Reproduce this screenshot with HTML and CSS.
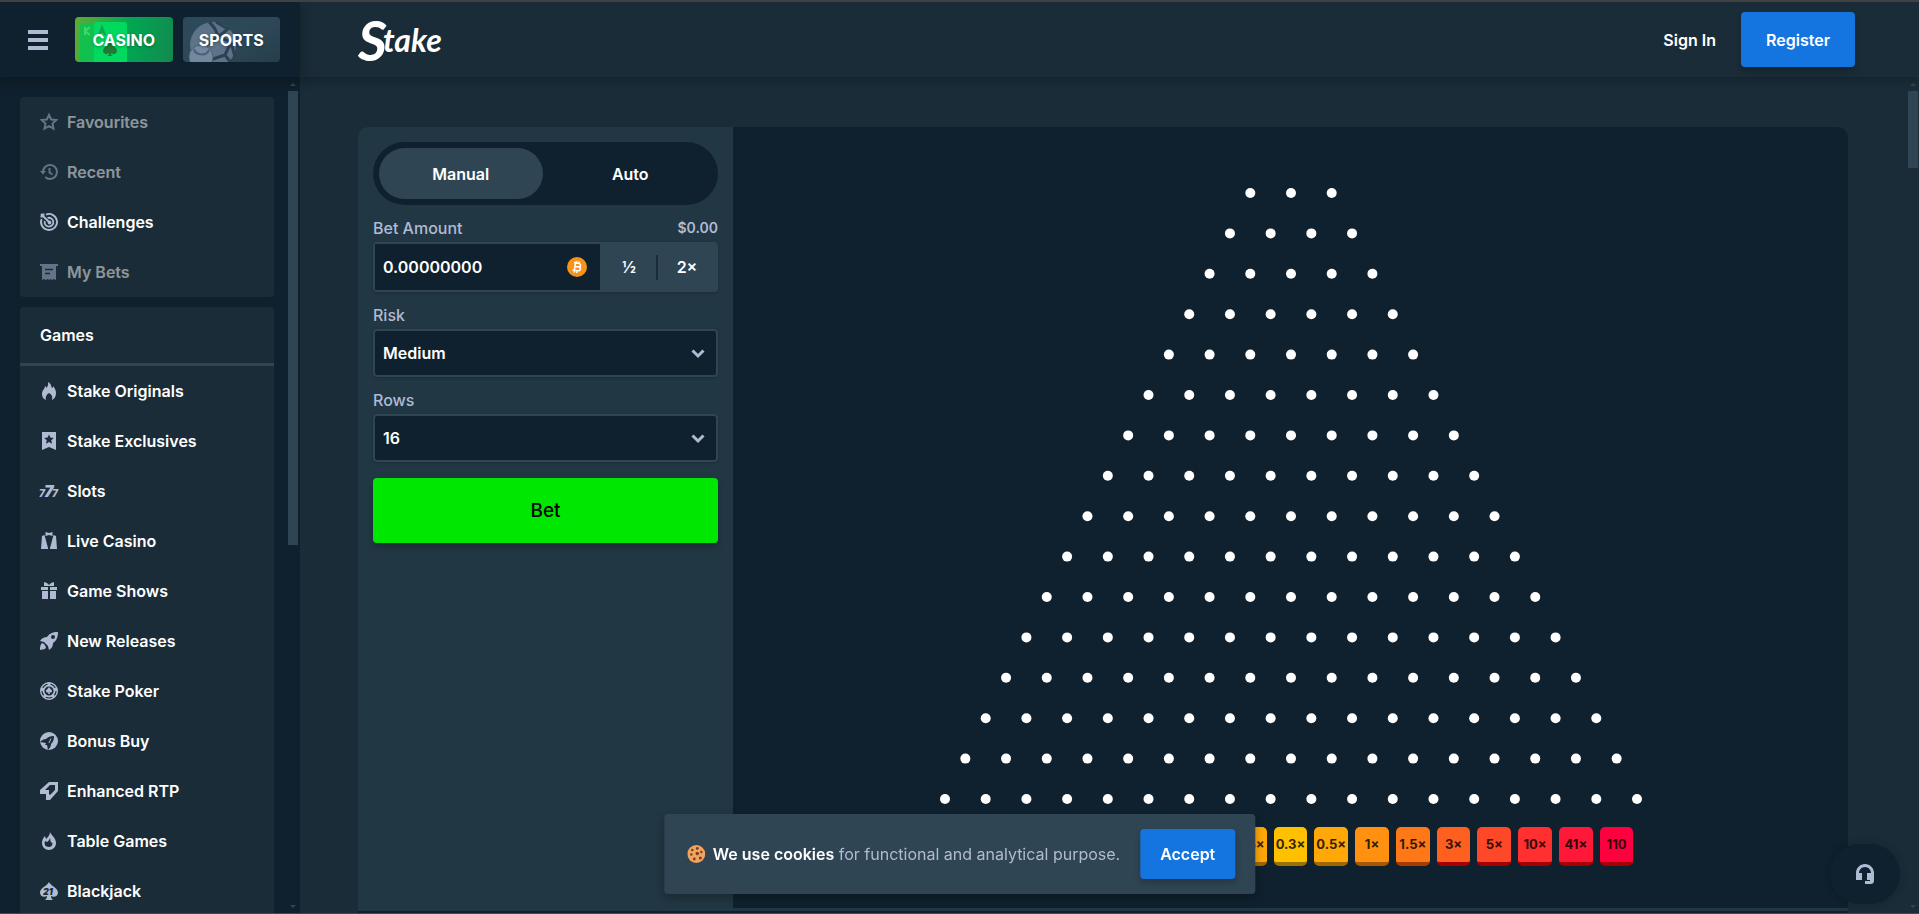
FILE: index.html
```html
<!DOCTYPE html>
<html lang="en">
<head>
  <meta charset="UTF-8" />
  <meta name="viewport" content="width=device-width, initial-scale=1.0" />
  <title>Plinko - Stake</title>
  <link rel="stylesheet" href="styles.css">
</head>
<body>
  <div class="app">
    <div class="side-header">
      <button class="menu-btn" type="button" aria-label="Menu">
        <svg width="20" height="20" viewBox="0 0 20 20"><path d="M0 0h20v4H0zM0 8h20v4H0zM0 16h20v4H0z"/></svg>
      </button>
      <div class="mode-links">
        <a class="mode casino" href="#">
          <svg class="mode-art" viewBox="0 0 98 45" preserveAspectRatio="xMinYMin slice">
            <rect x="5" y="6" width="30" height="44" rx="3" fill="#12c04d"/>
            <path d="M10 10v8M15 10l-5 4 5 4" stroke="#3fd66a" stroke-width="2" fill="none"/>
            <rect x="19" y="5" width="33" height="44" rx="3" fill="#00d85f"/>
            <path d="M24 18l3-8 3 8M25 15h4" stroke="#0fa54c" stroke-width="2" fill="none"/>
            <path d="M35 25c2 4 7 5 7 9 0 3-4 4-6 2 0 2 1 3 2 3h-6c1 0 2-1 2-3-2 2-6 1-6-2 0-4 5-5 7-9z" fill="#1f7a35"/>
          </svg>
          <span>CASINO</span>
        </a>
        <a class="mode sports" href="#">
          <svg class="mode-art" viewBox="0 0 98 45" preserveAspectRatio="xMinYMin slice">
            <circle cx="30" cy="28" r="23" fill="#5c7388"/>
            <path d="M26 5c6 5 8 10 9 15l13 5M35 20L22 29M48 25l4 15M48 25l-6 13M33 5l12 7-10 8M42 38l-12 4M42 38l6 8" stroke="#2b4254" stroke-width="3" fill="none"/>
            <circle cx="18" cy="40" r="12" fill="#7489a0" stroke="#4a6175"/>
            <path d="M11 32c1 6 12 8 15 1" fill="none" stroke="#4a6175" stroke-width="2"/>
          </svg>
          <span>SPORTS</span>
        </a>
      </div>
    </div>

    <header class="top-bar">
      <a class="logo" href="#"><span class="logo-initial">S</span>take</a>
      <div class="account">
        <button class="sign-in" type="button">Sign In</button>
        <button class="blue-btn register" type="button">Register</button>
      </div>
    </header>

    <aside class="sidebar">
      <nav class="side-nav">
        <div class="nav-card">
          <a class="nav-item muted" href="#">
            <svg viewBox="0 0 18 18"><path d="M9 1.8l2.2 4.7 5.1.6-3.8 3.5 1 5.1L9 13.2l-4.5 2.5 1-5.1L1.700 7.100l5.100-.6z" fill="none" stroke="currentColor" stroke-width="2"/></svg>
            Favourites
          </a>
          <a class="nav-item muted" href="#">
            <svg viewBox="0 0 18 18" fill="none" stroke="currentColor" stroke-width="2"><path d="M3 9a7 7 0 1 1 2.200 5M9.500 5v4.500l3 2"/><path d="M0 8h6l-3 3.600z" fill="currentColor" stroke="none"/></svg>
            Recent
          </a>
          <a class="nav-item" href="#">
            <svg viewBox="0 0 18 18" fill="none" stroke="currentColor" stroke-width="1.800"><path d="M6 1.600A8 8 0 1 1 1.600 6"/><path d="M7.500 5a4.400 4.400 0 1 1-2.800 3"/><path d="M1 1l8.500 8.500M.5 3.500h3v-3"/><circle cx="9.500" cy="9.500" r="1"/></svg>
            Challenges
          </a>
          <a class="nav-item muted" href="#">
            <svg viewBox="0 0 18 18"><path d="M0 1h18v2h-2v14l-2-1-2 1-1.500-1L9 17l-1.500-1L6 17l-2-1-2 1V3H0z" fill="currentColor"/><path d="M5 6.500h8M5 10.500h5" stroke="#1a2c38" stroke-width="1.500"/></svg>
            My Bets
          </a>
        </div>

        <div class="nav-card">
          <h2 class="nav-title">Games</h2>
          <a class="nav-item" href="#">
            <svg viewBox="0 0 18 18" fill="currentColor"><path d="M8 0c4 2 3 5 4 6 1-.5 1-1 1-2 2 2 3 5 3 7 0 4-2 6-4 7 1-4-1-6-3-7-2 1-4 4-3 7-3-1-4-4-4-6 0-4 3-5 3-8 1 .5 1 1 1.500 2C8 4 8.500 2 8 0z"/></svg>
            Stake Originals
          </a>
          <a class="nav-item" href="#">
            <svg viewBox="0 0 18 18" fill="currentColor"><path d="M2 0h14v18l-7-3-7 3z"/><path d="M9 2.500l1.400 3.100 3.400.4-2.500 2.300.7 3.400L9 10l-3 1.700.7-3.400L4.200 6l3.400-.4z" fill="#1a2c38"/></svg>
            Stake Exclusives
          </a>
          <a class="nav-item" href="#">
            <svg class="sevens" viewBox="0 0 18 18" fill="currentColor"><text x="-1" y="15" font-size="10">7</text><text x="4" y="15" font-size="16">7</text><text x="12" y="15" font-size="10">7</text></svg>
            Slots
          </a>
          <a class="nav-item" href="#">
            <svg viewBox="0 0 18 18" fill="currentColor"><path d="M5.500 0L9 1l3.500-1v4L9 3 5.500 4zM2 4l2.500-1L8 16v1H1zM16 4l-2.500-1L10 16v1h7z"/></svg>
            Live Casino
          </a>
          <a class="nav-item" href="#">
            <svg viewBox="0 0 18 18" fill="currentColor"><path d="M4 0l3 1 2 2 2-2 3-1v4H4zM1 5h7v3H1zM10 5h7v3h-7zM2 9h6v8H2zM10 9h6v8h-6z"/></svg>
            Game Shows
          </a>
          <a class="nav-item" href="#">
            <svg viewBox="0 0 18 18" fill="currentColor" fill-rule="evenodd"><path d="M18 0c0 6-2 9-5 11 0 3-1 5-4 7l-1-4-4-4-4-1c2-3 4-4 7-4 2-3 5-5 11-5zm-5 3a2 2 0 1 0 0 4 2 2 0 0 0 0-4zM2 11l2 1 2 3-1 2-5 1c0-3 0-5 2-7z"/></svg>
            New Releases
          </a>
          <a class="nav-item" href="#">
            <svg viewBox="0 0 18 18" fill="none" stroke="currentColor"><circle cx="9" cy="9" r="8.300" stroke-width="1.400"/><circle cx="9" cy="9" r="5.500" stroke-width="1.800"/><path d="M9 1v3M1 7l3 1M17 7l-3 1M4 15l2-2M14 15l-2-2" stroke-width="3"/><path d="M9 5c1 2 3 2.500 3 4 0 1.500-1.500 2-2.500 1l.5 2H8l.5-2C7.500 11 6 10.500 6 9c0-1.500 2-2 3-4z" fill="currentColor" stroke="none"/></svg>
            Stake Poker
          </a>
          <a class="nav-item" href="#">
            <svg viewBox="0 0 18 18"><circle cx="9" cy="9" r="9" fill="currentColor"/><path d="M14 4c0 4-1 6-3 8 0 2-1 4-3 6l-1-5H5l1-2-6-1c2-2 4-3 6-3 2-2 4-3 8-3z" fill="#1a2c38"/><path d="M11 6.500l-2 4.500" stroke="currentColor"/></svg>
            Bonus Buy
          </a>
          <a class="nav-item" href="#">
            <svg viewBox="0 0 18 18" fill="currentColor" fill-rule="evenodd"><path d="M9 0h9v9l-8 9H6v-6H0V8zm1 3L5 8h4v4l1 1 5-5V3z"/></svg>
            Enhanced RTP
          </a>
          <a class="nav-item" href="#">
            <svg viewBox="0 0 18 18" fill="currentColor" fill-rule="evenodd"><path d="M10 0c1 3 6 6 6 11 0 4-3 7-7 7s-7-3-7-7c0-3 1-5 3-7l1 3c2-2 4-4 4-7zm0 6c-1 3-2 3-3 4l-2-1c-1 3 0 6 4 6 3 0 4-3 3-5l-1 1z"/></svg>
            Table Games
          </a>
          <a class="nav-item" href="#">
            <svg class="twenty-one" viewBox="0 0 18 18" fill="currentColor"><path d="M9 0c2 4 9 6 9 10.500 0 4-4 5-7 3.500 0 2 1 3 2 4H5c1-1 2-2 2-4-3 1.500-7 .5-7-3.500C0 6 7 4 9 0z"/><text x="3" y="13" font-size="9" fill="#1a2c38">21</text></svg>
            Blackjack
          </a>
        </div>
      </nav>
      <div class="rail">
        <span class="rail-arrow up"></span>
        <span class="rail-thumb"></span>
        <span class="rail-arrow down"></span>
      </div>
    </aside>

    <div class="page">
      <main class="content">
        <div class="game">
          <form class="bet-panel">
            <div class="tabs">
              <button class="tab active" type="button">Manual</button>
              <button class="tab" type="button">Auto</button>
            </div>

            <div class="field-label">
              <label for="amount">Bet Amount</label>
              <span class="fiat">$0.00</span>
            </div>
            <div class="amount-group">
              <div class="amount-box">
                <input type="text" id="amount" value="0.00000000" />
                <svg width="20" height="20" viewBox="0 0 20 20"><circle cx="10" cy="10" r="10" fill="#f7931a"/><path d="M7 5.500l4.500.8c3 .6 2.500 3.400.3 3.500 2.500.5 2.200 4.300-1 3.900L5.500 13M8.500 6l-1.200 7.300M8 9.400l4 .6M9.500 4l-.3 2M12 4.500l-.3 2M7.500 13.500l-.3 2M10 14l-.3 2" fill="none" stroke="#fff" stroke-width="1.500"/></svg>
              </div>
              <button class="amount-btn" type="button">½</button>
              <button class="amount-btn" type="button">2×</button>
            </div>

            <div class="field-label"><label for="risk">Risk</label></div>
            <div class="select-box">
              <select id="risk">
                <option>Low</option>
                <option selected>Medium</option>
                <option>High</option>
              </select>
              <svg class="chevron" width="14" height="10" viewBox="0 0 14 10"><path d="M1.500 1.500L7 7l5.500-5.500"/></svg>
            </div>

            <div class="field-label"><label for="rows">Rows</label></div>
            <div class="select-box">
              <select id="rows">
                <option>8</option>
                <option>12</option>
                <option selected>16</option>
              </select>
              <svg class="chevron" width="14" height="10" viewBox="0 0 14 10"><path d="M1.500 1.500L7 7l5.500-5.500"/></svg>
            </div>

            <button class="bet-btn" type="button">Bet</button>
          </form>

          <section class="board">
            <svg class="pins" id="pins" viewBox="0 0 702 616"></svg>
            <div class="payouts">
              <span class="payout p8">110</span>
              <span class="payout p7">41×</span>
              <span class="payout p6">10×</span>
              <span class="payout p5">5×</span>
              <span class="payout p4">3×</span>
              <span class="payout p3">1.5×</span>
              <span class="payout p2">1×</span>
              <span class="payout p1">0.5×</span>
              <span class="payout p0">0.3×</span>
              <span class="payout p1">0.5×</span>
              <span class="payout p2">1×</span>
              <span class="payout p3">1.5×</span>
              <span class="payout p4">3×</span>
              <span class="payout p5">5×</span>
              <span class="payout p6">10×</span>
              <span class="payout p7">41×</span>
              <span class="payout p8">110</span>
            </div>
          </section>
        </div>
        <div class="game-footer"></div>
      </main>
      <div class="rail page-rail">
        <span class="rail-arrow up"></span>
        <span class="rail-thumb"></span>
        <span class="rail-arrow down"></span>
      </div>
    </div>
  </div>

  <div class="cookie-bar">
    <svg width="18" height="18" viewBox="0 0 18 18"><circle cx="9" cy="9" r="9" fill="#f0a45d"/><g fill="#7a3d27"><circle cx="5" cy="5" r="1.300"/><circle cx="10" cy="3.500" r="1.400"/><circle cx="10" cy="8.500" r="1.700"/><circle cx="14" cy="7" r="1.200"/><circle cx="4" cy="9.500" r="1.200"/><circle cx="7" cy="14" r="1.400"/><circle cx="13" cy="13" r="1.500"/></g></svg>
    <p><strong>We use cookies</strong> for functional and analytical purpose.</p>
    <button class="blue-btn accept" type="button">Accept</button>
  </div>

  <button class="support" type="button" aria-label="Live support">
    <svg width="20" height="20" viewBox="0 0 20 20"><path d="M10 0c5 0 9 4 9 9v7c0 3-1 4-4 4h-5v-3h5v-1h-3V9h4c0-3-2.500-6-6-6S4 6 4 9h3v7H1V9c0-5 4-9 9-9z"/></svg>
  </button>

  <script>
    // pyramid of pins: 3 on the first row, one more on each row below
    const rows = 16;
    const stepX = 692 / (rows + 1);
    const stepY = 606 / (rows - 1);
    let circles = '';

    for (let row = 0; row < rows; row++) {
      const count = row + 3;
      for (let i = 0; i < count; i++) {
        const x = 351 + (i - (count - 1) / 2) * stepX;
        const y = 5 + row * stepY;
        circles += `<circle cx="${x}" cy="${y}" r="5" />`;
      }
    }
    document.getElementById('pins').innerHTML = circles;
  </script>
</body>
</html>
```
FILE: styles.css
```css
* {
  box-sizing: border-box;
}
body {
  margin: 0;
  font-family: Inter, "Liberation Sans", sans-serif;
  font-size: 16px;
  font-weight: 600;
  line-height: 24px;
  color: #fff;
  background: #1a2c38;
}
a {
  color: inherit;
  text-decoration: none;
}
button, input, select {
  font: inherit;
  color: inherit;
  border: none;
  padding: 0;
  margin: 0;
  background: none;
}
button {
  cursor: pointer;
}
.app {
  display: grid;
  grid-template-columns: 300px 1fr;
  grid-template-rows: 75px 1fr;
  height: 100vh;
  overflow: hidden;
  border-top: 2px solid #414141;
  border-bottom: 1px solid #4a4549;
}

/* header */
.side-header {
  display: flex;
  align-items: center;
  gap: 27px;
  padding: 0 20px 0 28px;
  background: #0f212e;
  box-shadow: 0 4px 12px rgba(0,0,0,0.3);
  z-index: 2;
}
.menu-btn {
  display: flex;
  fill: #b1bad3;
}
.mode-links {
  display: grid;
  grid-template-columns: 1fr 1fr;
  gap: 10px;
  flex: 1;
}
.mode {
  position: relative;
  display: flex;
  align-items: center;
  justify-content: center;
  height: 45px;
  border-radius: 4px;
  overflow: hidden;
  font-weight: 700;
  text-shadow: 0 1px 3px rgba(0,0,0,0.3);
}
.mode span {
  position: relative;
}
.mode-art {
  position: absolute;
  inset: 0;
  width: 100%;
  height: 100%;
}
.casino {
  background: linear-gradient(100deg, #5eac35, #00a651 55%, #138a4e);
}
.sports {
  background: linear-gradient(150deg, #2c4a5c, #2d4756 60%, #243e4c);
}
.top-bar {
  display: flex;
  align-items: center;
  justify-content: space-between;
  padding: 0 64px 0 58px;
  background: #1a2c38;
  box-shadow: 0 4px 8px rgba(0,0,0,0.2);
  z-index: 1;
}
.logo {
  display: flex;
  align-items: center;
  font-family: Lato, sans-serif;
  font-size: 32px;
  font-style: italic;
  font-weight: 700;
  line-height: 40px;
}
.logo-initial {
  margin-right: -4px;
  font-size: 56px;
}
.account {
  display: flex;
  align-items: center;
  gap: 25px;
}
.blue-btn {
  border-radius: 4px;
  background: #1475e1;
  box-shadow: 0 4px 6px rgba(0,0,0,0.2);
}
.register {
  width: 114px;
  height: 55px;
}

/* sidebar */
.sidebar {
  display: flex;
  min-height: 0;
  padding-right: 2px;
  background: #0f212e;
}
.side-nav {
  flex: 1;
  padding: 20px 14px 0 20px;
  overflow: hidden;
}
.nav-card {
  margin-bottom: 10px;
  border-radius: 4px;
  background: #1a2c38;
}
.nav-title {
  margin: 0;
  padding: 16px 20px;
  border-bottom: 3px solid #2f4553;
  font-size: 16px;
  font-weight: 600;
}
.nav-item {
  display: flex;
  align-items: center;
  gap: 9px;
  height: 50px;
  padding: 0 20px;
}
.nav-item svg {
  width: 18px;
  height: 18px;
  flex: none;
  color: #b1bad3;
  overflow: visible;
}
.muted {
  opacity: 0.5;
}
.sevens, .twenty-one {
  font-style: italic;
  font-weight: 900;
}
.rail {
  display: flex;
  flex-direction: column;
  align-items: center;
  width: 10px;
  padding: 6px 0 5px;
}
.rail-arrow {
  border: 3px solid transparent;
}
.up {
  border-top: none;
  border-bottom-color: #2f4553;
}
.down {
  margin-top: auto;
  border-bottom: none;
  border-top-color: #2f4553;
}
.rail-thumb {
  width: 10px;
  height: 55%;
  margin-top: 5px;
  background: #2f4553;
}

/* page */
.page {
  display: flex;
  min-height: 0;
  padding-right: 1px;
}
.content {
  flex: 1;
  padding: 50px 60px 0 58px;
  overflow: hidden;
}
.page-rail .rail-thumb {
  height: 77px;
}
.game {
  display: flex;
  border-radius: 10px 10px 0 0;
  overflow: hidden;
}
.game-footer {
  height: 60px;
  border-top: 3px solid #213743;
  background: #0f212e;
}
.bet-panel {
  width: 375px;
  padding: 15px;
  background: #213743;
}
.tabs {
  display: grid;
  grid-template-columns: 1fr 1fr;
  gap: 6px;
  padding: 6px;
  border-radius: 32px;
  background: #0f212e;
}
.tab {
  height: 51px;
  border-radius: 26px;
}
.tab.active {
  background: #2f4553;
}
.field-label {
  display: flex;
  justify-content: space-between;
  margin: 11px 0 2px;
  font-weight: 500;
  color: #b1bad3;
}
.fiat {
  font-size: 14px;
  font-weight: 600;
}
.amount-group {
  display: flex;
  height: 50px;
  border: 2px solid #2f4553;
  border-radius: 4px;
  background: #2f4553;
  box-shadow: 0 1px 3px rgba(0,0,0,0.2);
}
.amount-box {
  display: flex;
  align-items: center;
  flex: 1;
  min-width: 0;
  padding: 0 13px 0 8px;
  background: #0f212e;
}
.amount-box input {
  flex: 1;
  min-width: 0;
}
.amount-btn {
  width: 58px;
}
.amount-btn + .amount-btn {
  position: relative;
}
.amount-btn + .amount-btn::before {
  content: "";
  position: absolute;
  left: -2px;
  top: 11px;
  width: 2px;
  height: 25px;
  background: #1a2c38;
}
.select-box {
  position: relative;
}
.select-box select {
  display: block;
  width: 100%;
  height: 48px;
  padding: 0 8px;
  border: 2px solid #2f4553;
  border-radius: 4px;
  background: #0f212e;
  box-shadow: 0 1px 3px rgba(0,0,0,0.2);
  appearance: none;
}
.chevron {
  position: absolute;
  right: 13px;
  top: 20px;
  fill: none;
  stroke: #b1bad3;
  stroke-width: 3;
  pointer-events: none;
}
.bet-btn {
  width: 100%;
  height: 65px;
  margin-top: 16px;
  border-radius: 4px;
  background: #00e701;
  box-shadow: 0 4px 6px rgba(0,0,0,0.2);
  color: #05080a;
  font-size: 19px;
  font-weight: 500;
}
.board {
  display: flex;
  flex-direction: column;
  align-items: center;
  flex: 1;
  padding: 61px 20px 42px;
  background: #0f212e;
}
.pins {
  width: 100%;
  max-width: 702px;
  fill: #fff;
}
.payouts {
  display: grid;
  grid-template-columns: repeat(17, minmax(0, 1fr));
  gap: 7px;
  width: 100%;
  max-width: 686px;
  margin-top: 23px;
}
.payout {
  height: 39px;
  border-bottom: 4px solid;
  border-radius: 5px;
  overflow: hidden;
  text-align: center;
  white-space: nowrap;
  font-size: 13px;
  font-weight: 700;
  line-height: 35px;
}
.p0 { background: #ffc000; border-color: #997300; color: #332600; }
.p1 { background: #ffa808; border-color: #a16800; color: #332200; }
.p2 { background: #ff9010; border-color: #a95700; color: #331d03; }
.p3 { background: #ff7818; border-color: #a93d00; color: #331805; }
.p4 { background: #ff6020; border-color: #a60004; color: #331306; }
.p5 { background: #ff4827; border-color: #a60004; color: #330e08; }
.p6 { background: #ff302f; border-color: #a60004; color: #330a09; }
.p7 { background: #ff1837; border-color: #a60004; color: #33050b; }
.p8 { background: #ff003f; border-color: #a60004; color: #33000d; }

/* floating items */
.cookie-bar {
  position: fixed;
  left: 50%;
  bottom: 20px;
  transform: translateX(-50%);
  display: flex;
  align-items: center;
  height: 80px;
  padding: 0 20px 0 23px;
  border-radius: 4px;
  background: #2f4553;
  box-shadow: 0 4px 10px rgba(0,0,0,0.25);
  white-space: nowrap;
  z-index: 3;
}
.cookie-bar p {
  margin: 0 20px 0 8px;
  font-weight: 400;
  color: #b1bad3;
}
.cookie-bar strong {
  font-weight: 600;
  color: #fff;
}
.accept {
  width: 95px;
  height: 50px;
}
.support {
  position: fixed;
  right: 19px;
  bottom: 10px;
  display: flex;
  align-items: center;
  justify-content: center;
  width: 70px;
  height: 60px;
  border-radius: 30px;
  background: #0f212e;
  box-shadow: 0 0 8px rgba(0,0,0,0.2);
  fill: #b1bad3;
  z-index: 3;
}
```
